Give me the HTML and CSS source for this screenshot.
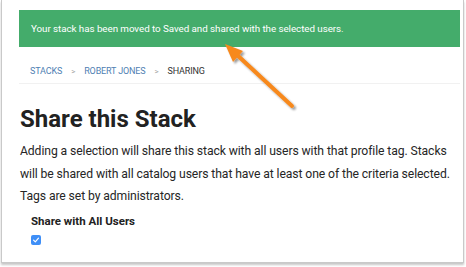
FILE: index.html
```html
<!DOCTYPE html>
<html>
<head>
<meta charset="utf-8">
<link rel="stylesheet" href="styles.css">
</head>
<body>
<div class="frame">
  <div class="alert">Your stack has been moved to Saved and shared with the selected users.</div>
  <nav class="crumbs">
    <a class="crumb-link">STACKS</a><span class="sep">&gt;</span><a class="crumb-link">ROBERT JONES</a><span class="sep">&gt;</span><span class="crumb-current">SHARING</span>
  </nav>
  <h1 class="title">Share this Stack</h1>
  <p class="desc">Adding a selection will share this stack with all users with that profile tag. Stacks will be shared with all catalog users that have at least one of the criteria selected. Tags are set by administrators.</p>
  <div class="option">
    <div class="option-label">Share with All Users</div>
    <span class="checkbox">
      <svg width="10" height="10" viewBox="0 0 10 10"><path d="M2.6 5.2 L4.3 6.9 L7.5 3.2" fill="none" stroke="#fff" stroke-width="1.2" stroke-linecap="round" stroke-linejoin="round"/></svg>
    </span>
  </div>
  <svg class="arrow" width="466" height="267" viewBox="0 0 466 267">
    <defs>
      <filter id="sh" x="-20%" y="-20%" width="140%" height="140%">
        <feGaussianBlur in="SourceAlpha" stdDeviation="1.2"/>
        <feOffset dx="2" dy="2" result="b"/>
        <feComponentTransfer><feFuncA type="linear" slope="0.4"/></feComponentTransfer>
        <feMerge><feMergeNode/><feMergeNode in="SourceGraphic"/></feMerge>
      </filter>
    </defs>
    <g filter="url(#sh)">
      <line x1="291" y1="106" x2="235" y2="54" stroke="#f7891f" stroke-width="4" stroke-linecap="round"/>
      <polygon points="224,44 242,51 232,62" fill="#f7891f"/>
    </g>
  </svg>
</div>
</body>
</html>
```
FILE: styles.css
```css
html, body {
  margin: 0;
  padding: 0;
  background: #ffffff;
}
body {
  font-family: Roboto, "Liberation Sans", Arial, sans-serif;
  width: 466px;
  height: 267px;
  overflow: hidden;
}
.frame {
  position: relative;
  box-sizing: border-box;
  margin-left: 1px;
  width: 463px;
  height: 263px;
  border: 1px solid #c9c9c9;
  border-top: none;
  background: #fff;
  box-shadow: 0 2px 2px rgba(0,0,0,0.22);
  padding: 10px 3px 0 17px;
}
.alert {
  background: #44ac6b;
  color: #ffffff;
  font-size: 9.8px;
  letter-spacing: -0.05px;
  height: 37px;
  line-height: 37px;
  padding-left: 12px;
  box-sizing: border-box;
}
.crumbs {
  display: flex;
  align-items: flex-end;
  box-sizing: border-box;
  height: 37px;
  padding: 0 0 6px 11px;
  font-size: 9px;
  letter-spacing: -0.15px;
  line-height: 11px;
  border-bottom: 1px solid #f1f1f1;
}
.crumb-link {
  color: #4f7fb3;
}
.sep {
  color: #a5a5a5;
  margin: 0 9px;
  font-size: 8px;
}
.crumb-current {
  color: #333;
}
.title {
  margin: 21px 0 0 1px;
  font-size: 24px;
  font-weight: 700;
  color: #222;
  line-height: 28px;
}
.desc {
  margin: 7px 0 0 1px;
  font-size: 12.2px;
  letter-spacing: -0.1px;
  line-height: 22.5px;
  color: #262626;
  width: 440px;
}
.option {
  margin: 6px 0 0 12px;
}
.option-label {
  font-size: 11.5px;
  font-weight: 700;
  color: #222;
  line-height: 14px;
}
.checkbox {
  display: flex;
  align-items: center;
  justify-content: center;
  margin-top: 7px;
  width: 10px;
  height: 10px;
  border-radius: 2px;
  background: #3f8ff7;
}
.arrow {
  position: absolute;
  left: -1px;
  top: 0;
  pointer-events: none;
}
```
